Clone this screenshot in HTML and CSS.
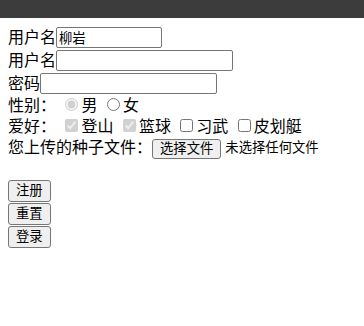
FILE: index.html
```html
<!DOCTYPE html>
<html lang="zh-CN">
<head>
    <meta charset="UTF-8">
    <title>注册</title>
    <link rel="stylesheet" href="styles.css">
</head>
<body>

<div class="topbar"></div>

<form id="regForm" class="page">
    <div class="row input-row">用户名<input type="text" class="field short" value="柳岩"></div>
    <div class="row input-row">用户名<input type="text" class="field" name="username"></div>
    <div class="row input-row">密码<input type="password" class="field" name="password"></div>
    <div class="row">
        性别： <input type="radio" name="sex" checked disabled>男
        <input type="radio" name="sex">女
    </div>
    <div class="row">
        爱好： <input type="checkbox" checked disabled>登山
        <input type="checkbox" checked disabled>篮球
        <input type="checkbox">习武
        <input type="checkbox">皮划艇
    </div>
    <div class="row file-row">您上传的种子文件：<button type="button" class="btn file-btn">选择文件</button><span class="no-file">未选择任何文件</span></div>
    <div class="spacer"></div>
    <div class="row btn-row"><button type="submit" class="btn">注册</button></div>
    <div class="row btn-row"><button type="reset" class="btn">重置</button></div>
    <div class="row btn-row"><button type="button" class="btn">登录</button></div>
</form>

</body>
</html>
```

FILE: styles.css
```css
body {
    margin: 0;
    font-family: "Liberation Sans", "Noto Sans CJK SC", sans-serif;
    font-size: 16px;
    background-color: white;
    color: black;
}
.topbar {
    height: 18px;
    background-color: #3c3c3c;
}
.page {
    margin: 0;
    padding: 8px;
}
.row {
    height: 21px;
    line-height: 21px;
    white-space: nowrap;
}
.input-row {
    height: 23px;
    line-height: 23px;
}
.file-row {
    height: 22px;
    line-height: 22px;
}
.btn-row {
    height: 23px;
}
.spacer {
    height: 21px;
}
.field {
    box-sizing: border-box;
    width: 177px;
    height: 21px;
    margin: 1px 0 0;
    padding: 1px 2px;
    border: 1px solid #767676;
    border-radius: 2px;
    font-family: "Liberation Sans", "Noto Sans CJK SC", sans-serif;
    font-size: 13.33px;
    vertical-align: top;
}
.field.short {
    width: 106px;
}
input[type="radio"], input[type="checkbox"] {
    width: 13px;
    height: 13px;
    margin: 3px 3px 0 5px;
}
.btn {
    box-sizing: border-box;
    height: 22px;
    margin: 0;
    padding: 0 7px;
    border: 1px solid #767676;
    border-radius: 3px;
    background-color: #efefef;
    font-family: "Liberation Sans", "Noto Sans CJK SC", sans-serif;
    font-size: 13.33px;
    line-height: 18px;
    color: black;
    vertical-align: top;
}
.file-btn {
    height: 20px;
    margin-top: 2px;
    line-height: 16px;
}
.no-file {
    margin-left: 4px;
    font-size: 13.33px;
    vertical-align: top;
}
```
